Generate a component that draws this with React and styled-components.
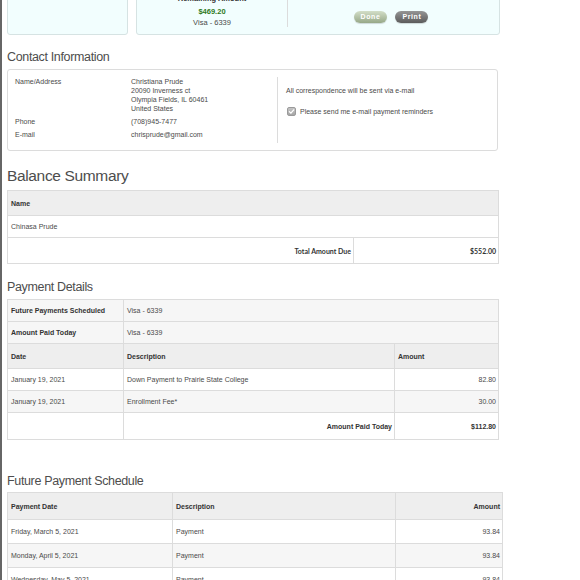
import React from "react";
import styled, { createGlobalStyle } from "styled-components";

const GlobalStyle = createGlobalStyle`
  html, body {
    margin: 0;
    padding: 0;
    background: #fff;
  }
  body {
    font-family: "Liberation Sans", Arial, sans-serif;
    color: #4a4a4a;
    overflow: hidden;
  }
`;

const Page = styled.div`
  min-height: 580px;
  width: 540px;
  border-left: 2px solid #666;
  padding-left: 5px;
  box-sizing: border-box;
`;

const TopRow = styled.div`
  display: flex;
  gap: 8px;
  margin-top: -26px;
`;

const InfoCard = styled.div`
  width: ${(p) => p.$w}px;
  height: 61px;
  box-sizing: border-box;
  background: #f2fefe;
  border: 1px solid #d6e3e3;
  border-radius: 3px;
  display: flex;
  padding-bottom: 7px;
`;

const Summary = styled.div`
  width: 151px;
  box-sizing: border-box;
  border-right: 1px solid #dcdcdc;
  padding-top: 18px;
  text-align: center;
  font-size: 7.5px;
  line-height: 11px;
`;

const SummaryLabel = styled.div`
  font-weight: 700;
  color: #333;
`;

const SummaryAmount = styled.div`
  margin-top: 2px;
  font-weight: 700;
  color: #2f7a22;
`;

const SummaryCard = styled.div`
  color: #4a4a4a;
`;

const Actions = styled.div`
  flex: 1;
  display: flex;
  justify-content: center;
  align-items: flex-start;
  gap: 8px;
  padding: 36px 5px 0 0;
`;

const PillButton = styled.button`
  height: 12px;
  padding: 0 7px;
  border: none;
  border-radius: 6px;
  font-family: "Liberation Sans", Arial, sans-serif;
  font-size: 7px;
  font-weight: 700;
  letter-spacing: 0.6px;
  color: #fff;
  line-height: 12px;
  background: ${(p) =>
    p.$variant === "done"
      ? "linear-gradient(#d3dec8, #97a888)"
      : "linear-gradient(#959595, #5c5c5c)"};
  box-shadow: 0 1px 1px rgba(0, 0, 0, 0.15);
  cursor: pointer;
`;

const Heading = styled.h2`
  margin: ${(p) => p.$mt}px 0 ${(p) => p.$mb}px;
  font-size: ${(p) => p.$size}px;
  line-height: ${(p) => p.$lh}px;
  font-weight: 400;
  letter-spacing: -0.35px;
  color: #4d4d4d;
`;

const ContactBox = styled.div`
  width: 491px;
  height: 82px;
  box-sizing: border-box;
  border: 1px solid #dcdcdc;
  border-radius: 3px;
  padding: 7px 0 7px;
  display: flex;
  font-size: 7px;
  line-height: 9px;
  color: #4a4a4a;
`;

const ContactGrid = styled.div`
  width: 270px;
  box-sizing: border-box;
  border-right: 1px solid #dcdcdc;
  padding-left: 7px;
  display: grid;
  grid-template-columns: 116px 1fr;
  row-gap: 4px;
  align-content: start;
`;

const ContactNotes = styled.div`
  padding: 9px 0 0 8px;
`;

const CheckRow = styled.label`
  display: flex;
  align-items: center;
  gap: 4px;
  margin-top: 12px;
  padding-left: 1px;
`;

const CheckBox = styled.span`
  width: 9px;
  height: 9px;
  box-sizing: border-box;
  border-radius: 2px;
  background: linear-gradient(#c4c4c4, #a6a6a6);
  border: 1px solid #9a9a9a;
  display: flex;
  align-items: center;
  justify-content: center;
`;

const DataTable = styled.table`
  width: ${(p) => p.$w}px;
  border-collapse: collapse;
  table-layout: fixed;
  font-size: 7px;
  color: #4a4a4a;
`;

const Col = styled.col`
  width: ${(p) => p.$w}px;
`;

const Row = styled.tr`
  height: ${(p) => p.$h}px;
  background: ${(p) =>
    p.$tone === "head" ? "#eeeeee" : p.$tone === "alt" ? "#f6f6f6" : "#ffffff"};
`;

const Cell = styled.td`
  border: 1px solid #dcdcdc;
  padding: 0 2px 0 3px;
  vertical-align: middle;
  text-align: ${(p) => p.$align || "left"};
  font-weight: ${(p) => (p.$bold ? 700 : 400)};
  color: ${(p) => (p.$bold ? "#333" : "#4a4a4a")};
  font-family: ${(p) =>
    p.$lato ? 'Lato, "Liberation Sans", sans-serif' : "inherit"};
  white-space: nowrap;
`;

const Check = () => (
  <svg width="7" height="7" viewBox="0 0 10 10">
    <path d="M2 5.2 L4.2 7.4 L8.2 2.6" fill="none" stroke="#fff" strokeWidth="1.8" strokeLinecap="round" strokeLinejoin="round" />
  </svg>
);

const schedule = [
  { date: "Friday, March 5, 2021", tone: "plain" },
  { date: "Monday, April 5, 2021", tone: "alt" },
  { date: "Wednesday, May 5, 2021", tone: "plain" },
  { date: "Saturday, June 5, 2021", tone: "alt" },
];

const App = () => {
  return (
    <>
      <GlobalStyle />
      <Page>
        <TopRow>
          <InfoCard $w={121} />
          <InfoCard $w={364}>
            <Summary>
              <SummaryLabel>Remaining Amount</SummaryLabel>
              <SummaryAmount>$469.20</SummaryAmount>
              <SummaryCard>Visa - 6339</SummaryCard>
            </Summary>
            <Actions>
              <PillButton $variant="done">Done</PillButton>
              <PillButton $variant="print">Print</PillButton>
            </Actions>
          </InfoCard>
        </TopRow>

        <Heading $size={12.5} $lh={15} $mt={15} $mb={4}>
          Contact Information
        </Heading>
        <ContactBox>
          <ContactGrid>
            <span>Name/Address</span>
            <span>
              Christiana Prude
              <br />
              20090 Inverness ct
              <br />
              Olympia Fields, IL 60461
              <br />
              United States
            </span>
            <span>Phone</span>
            <span>(708)945-7477</span>
            <span>E-mail</span>
            <span>chrisprude@gmail.com</span>
          </ContactGrid>
          <ContactNotes>
            <div>All correspondence will be sent via e-mail</div>
            <CheckRow>
              <CheckBox>
                <Check />
              </CheckBox>
              Please send me e-mail payment reminders
            </CheckRow>
          </ContactNotes>
        </ContactBox>

        <Heading $size={15.5} $lh={18} $mt={16} $mb={5}>
          Balance Summary
        </Heading>
        <DataTable $w={491}>
          <colgroup>
            <Col $w={346} />
            <Col $w={145} />
          </colgroup>
          <tbody>
            <Row $h={25} $tone="head">
              <Cell colSpan={2} $bold>
                Name
              </Cell>
            </Row>
            <Row $h={22}>
              <Cell colSpan={2}>Chinasa Prude</Cell>
            </Row>
            <Row $h={26}>
              <Cell $align="right" $bold $lato>
                Total Amount Due
              </Cell>
              <Cell $align="right" $bold $lato>
                $552.00
              </Cell>
            </Row>
          </tbody>
        </DataTable>

        <Heading $size={12.5} $lh={15} $mt={16} $mb={4}>
          Payment Details
        </Heading>
        <DataTable $w={491}>
          <colgroup>
            <Col $w={116} />
            <Col $w={271} />
            <Col $w={104} />
          </colgroup>
          <tbody>
            <Row $h={22} $tone="alt">
              <Cell $bold>Future Payments Scheduled</Cell>
              <Cell colSpan={2}>Visa - 6339</Cell>
            </Row>
            <Row $h={22} $tone="alt">
              <Cell $bold>Amount Paid Today</Cell>
              <Cell colSpan={2}>Visa - 6339</Cell>
            </Row>
            <Row $h={25} $tone="head">
              <Cell $bold>Date</Cell>
              <Cell $bold>Description</Cell>
              <Cell $bold>Amount</Cell>
            </Row>
            <Row $h={22}>
              <Cell>January 19, 2021</Cell>
              <Cell>Down Payment to Prairie State College</Cell>
              <Cell $align="right">82.80</Cell>
            </Row>
            <Row $h={22} $tone="alt">
              <Cell>January 19, 2021</Cell>
              <Cell>Enrollment Fee*</Cell>
              <Cell $align="right">30.00</Cell>
            </Row>
            <Row $h={27}>
              <Cell />
              <Cell $align="right" $bold>
                Amount Paid Today
              </Cell>
              <Cell $align="right" $bold>
                $112.80
              </Cell>
            </Row>
          </tbody>
        </DataTable>

        <Heading $size={12.5} $lh={15} $mt={34} $mb={3}>
          Future Payment Schedule
        </Heading>
        <DataTable $w={495}>
          <colgroup>
            <Col $w={165} />
            <Col $w={223} />
            <Col $w={107} />
          </colgroup>
          <tbody>
            <Row $h={27} $tone="head">
              <Cell $bold>Payment Date</Cell>
              <Cell $bold>Description</Cell>
              <Cell $bold $align="right">
                Amount
              </Cell>
            </Row>
            {schedule.map((s) => (
              <Row key={s.date} $h={24} $tone={s.tone}>
                <Cell>{s.date}</Cell>
                <Cell>Payment</Cell>
                <Cell $align="right">93.84</Cell>
              </Row>
            ))}
          </tbody>
        </DataTable>
      </Page>
    </>
  );
};

export default App;
